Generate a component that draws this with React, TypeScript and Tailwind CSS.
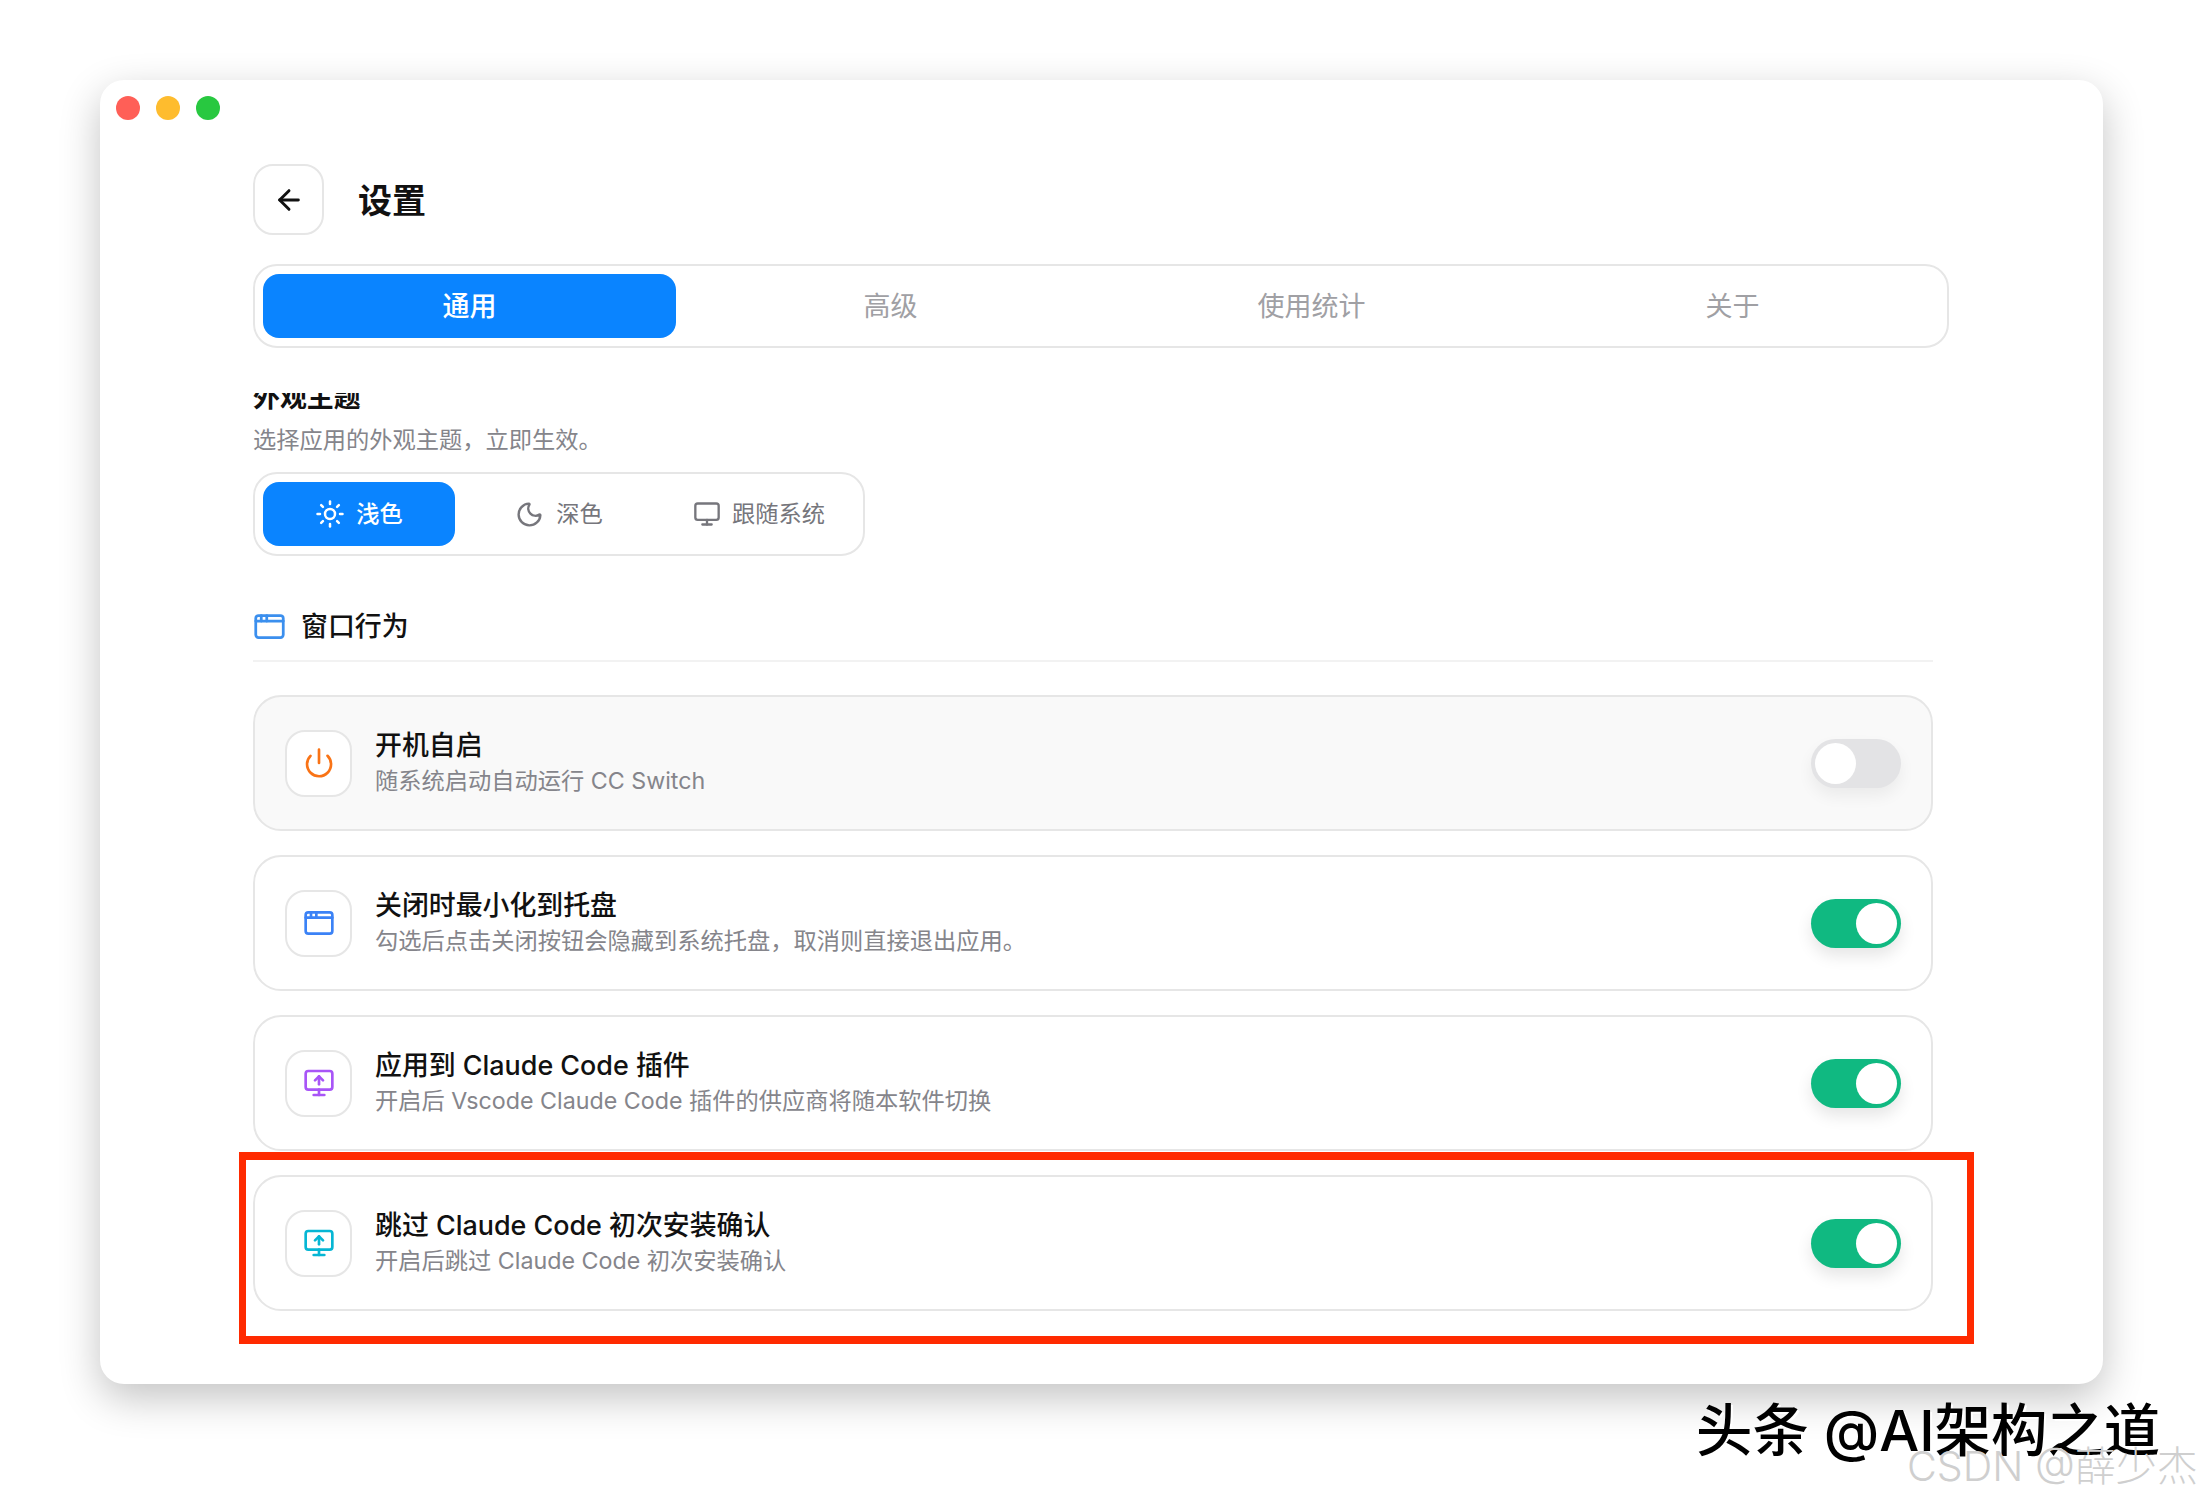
import { ArrowLeft, Sun, Moon, Monitor, Power, AppWindow, MonitorUp } from "lucide-react";
import type { ReactNode } from "react";

function Toggle({ on }: { on: boolean }) {
  return (
    <div
      className={
        on
          ? "flex h-[49px] w-[90px] items-center justify-end rounded-full bg-[#10b981] p-[4px] shadow-[0_8px_16px_rgba(0,0,0,0.10)]"
          : "flex h-[49px] w-[90px] items-center justify-start rounded-full bg-[#e3e3e5] p-[4px] shadow-[0_8px_16px_rgba(0,0,0,0.06)]"
      }
    >
      <div className="h-[41px] w-[41px] rounded-full bg-white" />
    </div>
  );
}

function Row({
  icon,
  title,
  desc,
  on,
  muted,
}: {
  icon: ReactNode;
  title: string;
  desc: string;
  on: boolean;
  muted?: boolean;
}) {
  return (
    <div
      className={
        muted
          ? "flex h-[136px] items-center rounded-[28px] border-2 border-[#e6e6e6] bg-[#f9f9f9] pl-[30px] pr-[30px]"
          : "flex h-[136px] items-center rounded-[28px] border-2 border-[#e6e6e6] bg-white pl-[30px] pr-[30px]"
      }
    >
      <div className="flex h-[67px] w-[67px] shrink-0 items-center justify-center rounded-[20px] border-2 border-[#e6e6e6] bg-white">
        {icon}
      </div>
      <div className="ml-[23px] flex flex-1 flex-col">
        <div className="text-[26.9px] font-medium leading-[36px] text-[#111111]">{title}</div>
        <div className="text-[23.25px] leading-[36px] text-[#85858b]">{desc}</div>
      </div>
      <Toggle on={on} />
    </div>
  );
}

export default function App() {
  return (
    <div className="relative h-[1502px] w-[2202px] overflow-hidden bg-white font-['Inter','Noto_Sans_CJK_SC',sans-serif]">
      <div className="ml-[100px] mt-[80px] h-[1304px] w-[2003px] rounded-[24px] bg-white pl-[16px] pt-[16px] shadow-[0_14px_40px_rgba(0,0,0,0.24)]">
        <div className="flex gap-[16px]">
          <div className="h-[24px] w-[24px] rounded-full bg-[#ff5f57]" />
          <div className="h-[24px] w-[24px] rounded-full bg-[#febc2e]" />
          <div className="h-[24px] w-[24px] rounded-full bg-[#28c840]" />
        </div>

        <div className="ml-[137px] w-[1696px]">
          <div className="mt-[44px] flex items-center">
            <div className="flex h-[71px] w-[71px] items-center justify-center rounded-[20px] border-2 border-[#e6e6e6] bg-white">
              <ArrowLeft size={32} strokeWidth={2.2} className="text-[#111111]" />
            </div>
            <h1 className="ml-[34px] pt-[2px] text-[34px] font-semibold leading-[44px] text-[#111111]">设置</h1>
          </div>

          <div className="mt-[29px] grid h-[84px] grid-cols-4 gap-[8px] rounded-[24px] border-2 border-[#e6e6e6] bg-white p-[8px]">
            <div className="flex items-center justify-center rounded-[16px] bg-[#0a84ff] pt-[2px] text-[27px] font-medium text-white">通用</div>
            <div className="flex items-center justify-center pt-[2px] text-[27px] font-normal text-[#a0a0a4]">高级</div>
            <div className="flex items-center justify-center pt-[2px] text-[27px] font-normal text-[#a0a0a4]">使用统计</div>
            <div className="flex items-center justify-center pt-[2px] text-[27px] font-normal text-[#a0a0a4]">关于</div>
          </div>

          <div className="mt-[45px] h-[930px] w-[1680px] overflow-hidden">
            <h2 className="-mt-[14px] text-[26.9px] font-semibold leading-[36px] text-[#111111]">外观主题</h2>
            <p className="mt-[8px] text-[23.25px] leading-[34px] text-[#85858b]">选择应用的外观主题，立即生效。</p>

            <div className="mt-[15px] grid h-[84px] w-[612px] grid-cols-3 gap-[8px] rounded-[24px] border-2 border-[#e6e6e6] bg-white p-[8px]">
              <div className="flex items-center justify-center gap-[11px] rounded-[16px] bg-[#0a84ff] text-[23.25px] font-medium text-white">
                <Sun size={30} strokeWidth={2} />
                <span>浅色</span>
              </div>
              <div className="flex items-center justify-center gap-[12px] text-[23.25px] font-normal text-[#76767c]">
                <Moon size={29} strokeWidth={2} />
                <span>深色</span>
              </div>
              <div className="flex items-center justify-center gap-[11px] text-[23.25px] font-normal text-[#76767c]">
                <Monitor size={28} strokeWidth={2} />
                <span>跟随系统</span>
              </div>
            </div>

            <div className="mt-[46px] flex h-[60px] items-center border-b-2 border-[#f2f2f2] pb-[10px]">
              <AppWindow size={33} strokeWidth={2} className="text-[#3b8fee]" />
              <span className="ml-[15px] text-[26.9px] font-medium leading-[36px] text-[#111111]">窗口行为</span>
            </div>

            <div className="mt-[33px] flex flex-col gap-[24px]">
              <Row
                muted
                on={false}
                icon={<Power size={32} strokeWidth={2} className="text-[#f97316]" />}
                title="开机自启"
                desc="随系统启动自动运行 CC Switch"
              />
              <Row
                on
                icon={<AppWindow size={32} strokeWidth={2} className="text-[#3b82f6]" />}
                title="关闭时最小化到托盘"
                desc="勾选后点击关闭按钮会隐藏到系统托盘，取消则直接退出应用。"
              />
              <Row
                on
                icon={<MonitorUp size={32} strokeWidth={2} className="text-[#a855f7]" />}
                title="应用到 Claude Code 插件"
                desc="开启后 Vscode Claude Code 插件的供应商将随本软件切换"
              />
              <Row
                on
                icon={<MonitorUp size={32} strokeWidth={2} className="text-[#06b6d4]" />}
                title="跳过 Claude Code 初次安装确认"
                desc="开启后跳过 Claude Code 初次安装确认"
              />
            </div>
          </div>
        </div>
      </div>

      <div className="absolute left-[239px] top-[1152px] h-[192px] w-[1735px] border-y-[8px] border-x-[7px] border-[#ff2a00]" />

      <div className="absolute left-[1696px] top-[1396px] whitespace-nowrap text-[56.4px] font-medium leading-[70px] text-black [text-shadow:2px_2px_0_#ffffff]">
        头条 @AI架构之道
      </div>
      <div className="absolute left-[1907px] top-[1440px] whitespace-nowrap text-[41px] font-light leading-[52px] text-[#cfcfcf]">
        CSDN @薛少杰
      </div>
    </div>
  );
}
